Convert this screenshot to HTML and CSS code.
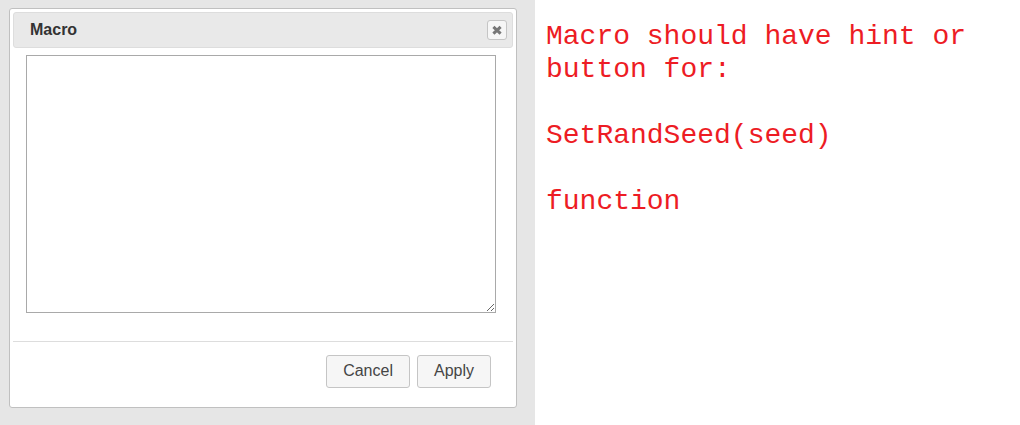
FILE: index.html
```html
<!DOCTYPE html>
<html lang="en">
<head>
<meta charset="utf-8">
<title>Macro</title>
<link rel="stylesheet" href="styles.css">
</head>
<body>
<main class="page">
  <div class="stage">
    <form class="dialog" role="dialog" aria-labelledby="dialog-title">
      <header class="titlebar">
        <h1 class="title" id="dialog-title">Macro</h1>
        <button class="close" type="button" aria-label="Close">
          <svg viewBox="0 0 10 10" width="10" height="10" aria-hidden="true"><path d="M1.4 1.9 8.6 8.7M8.6 1.9 1.4 8.7"/></svg>
        </button>
      </header>
      <div class="content">
        <textarea class="editor" aria-labelledby="dialog-title"></textarea>
      </div>
      <footer class="buttons">
        <button class="button" type="button">Cancel</button>
        <button class="button" type="button">Apply</button>
      </footer>
    </form>
  </div>
  <aside class="note">
    <p>Macro should have hint or button for:</p>
    <p>SetRandSeed(seed)</p>
    <p>function</p>
  </aside>
</main>
</body>
</html>
```

FILE: styles.css
```css
* { box-sizing: border-box; }
body { margin: 0; background: #fff; font-family: "Liberation Sans", Arial, sans-serif; }
.page { display: grid; grid-template-columns: 535fr 485fr; min-height: 100vh; }
.stage { background: #e6e6e6; padding: 8px 18px 17px 9px; display: flex; }
.dialog { flex: 1; display: flex; flex-direction: column; background: #fff; border: 1px solid #c0c0c0; border-radius: 3px; padding: 3px; }
.titlebar { display: flex; align-items: center; justify-content: space-between; height: 36px; padding: 0 5px 0 16px; background: #e9e9e9; border: 1px solid #ddd; border-radius: 3px; }
.title { margin: 0; font-size: 16px; line-height: 20px; color: #333; }
.close { display: flex; align-items: center; justify-content: center; width: 20px; height: 20px; padding: 0; background: #f6f6f6; border: 1px solid #c5c5c5; border-radius: 3px; }
.close path { fill: none; stroke: #777; stroke-width: 3; }
.content { padding: 7px 17px 28px 13px; flex: 1; display: flex; }
.editor { flex: 1; min-width: 0; margin: 0; padding: 2px; border: 1px solid #a9a9a9; border-radius: 0; background: #fff; resize: both; outline: 0; }
.buttons { display: flex; justify-content: flex-end; gap: 7px; padding: 13px 22px 16px; border-top: 1px solid #ddd; }
.button { padding: 5px 16px 7px; font: 16px/19px "Liberation Sans", Arial, sans-serif; color: #454545; background: #f6f6f6; border: 1px solid #c5c5c5; border-radius: 3px; }
.note { padding: 20px 11px; font: 28px/33px "Liberation Mono", "Courier New", monospace; color: #ed1c24; }
.note p { margin: 0 0 33px; }
```
